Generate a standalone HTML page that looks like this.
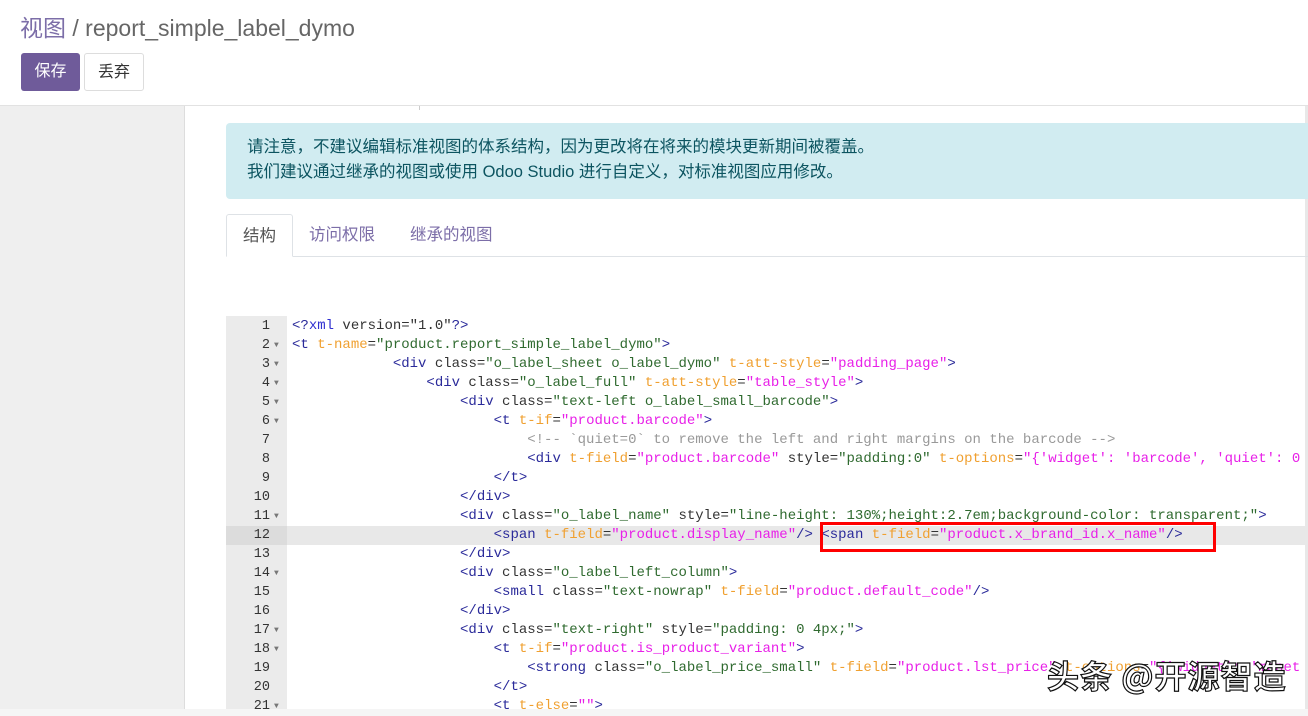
<!DOCTYPE html>
<html><head><meta charset="utf-8"><style>
*{margin:0;padding:0;box-sizing:border-box}
body{width:1308px;height:709px;overflow:hidden;background:#f5f5f5;font-family:"Liberation Sans","Noto Sans CJK SC",sans-serif;position:relative}
.hdr{position:absolute;left:0;top:0;width:1308px;height:106px;background:#fff;border-bottom:1px solid #e2e2e2}
.title{position:absolute;left:20px;top:9px;font-size:23px;color:#666}
.title b{font-weight:normal;color:#7c6ea8}
.btn{position:absolute;top:53px;height:38px;font-size:16px;line-height:38px;text-align:center;border-radius:3px}
.side{position:absolute;left:0;top:106px;width:185px;height:603px;background:#efefef;border-right:1px solid #ddd}
.sheet{position:absolute;left:185px;top:106px;width:1120px;height:603px;background:#fff}
.rstrip{position:absolute;left:1305px;top:106px;width:3px;height:603px;background:#e8e8e8}
.alert{position:absolute;left:226px;top:123px;width:1082px;height:76px;background:#d1ecf1;border-radius:4px 0 0 4px;color:#0c5460;font-size:16.5px;line-height:25px;padding:12px 0 0 21px}
.tabs{position:absolute;left:226px;top:256px;width:1082px;border-top:1px solid #dee2e6}
.tab{position:absolute;top:214px;height:43px;font-size:16.5px;line-height:43px;color:#7c6ea8}
.gut{position:absolute;left:226px;top:316px;width:61px;height:393px;background:#ebebeb}
.code{position:absolute;left:226px;top:317px;width:1082px;font-family:"Liberation Mono",monospace;font-size:14px}
.l{height:19px;line-height:19px;position:relative;white-space:pre}
.n{position:absolute;left:0;width:44px;text-align:right;color:#333;font-size:13.5px}
.f{position:absolute;left:48px;font-size:8px;color:#777}
.c{position:absolute;left:66px;color:#333}
.t{color:#2a2a9a}.a{color:#f0a030}.s{color:#2f6a2f}.m{color:#e820e8}.g{color:#999}
.hl{background:#e8e8e8}
.red{position:absolute;left:820px;top:522px;width:396px;height:30px;border:3px solid #f00}
.wm{position:absolute;left:1047px;top:652px;font-size:32px;color:#fff;-webkit-text-stroke:1.2px #111;font-family:"Noto Sans CJK SC",sans-serif;font-weight:bold;letter-spacing:1px}
</style></head><body>
<div class="hdr">
<div class="title"><b>视图</b> / report_simple_label_dymo</div>
<div class="btn" style="left:21px;width:59px;background:#6f5b9a;color:#fff">保存</div>
<div class="btn" style="left:84px;width:60px;border:1px solid #ddd;color:#333">丢弃</div>
</div>
<div class="side"></div>
<div class="sheet"></div>
<div class="rstrip"></div>
<div style="position:absolute;left:419px;top:106px;width:1px;height:4px;background:#ccc"></div>
<div class="alert">请注意，不建议编辑标准视图的体系结构，因为更改将在将来的模块更新期间被覆盖。<br>我们建议通过继承的视图或使用 Odoo Studio 进行自定义，对标准视图应用修改。</div>
<div class="tabs"></div>
<div class="tab" style="left:226px;width:67px;background:#fff;border:1px solid #dee2e6;border-bottom:1px solid #fff;border-radius:3px 3px 0 0;color:#555;text-align:center">结构</div>
<div class="tab" style="left:309px">访问权限</div>
<div class="tab" style="left:410px">继承的视图</div>
<div class="gut"></div>
<div class="code"><div class="l"><span class="n">1</span><span class="c"><span class="t">&lt;?</span><span class="t" style="color:#3030d0">xml</span> version="1.0"<span class="t">?&gt;</span></span></div><div class="l"><span class="n">2</span><span class="f">▼</span><span class="c"><span class="t">&lt;t</span> <span class="a">t-name</span>=<span class="s">"product.report_simple_label_dymo"</span><span class="t">&gt;</span></span></div><div class="l"><span class="n">3</span><span class="f">▼</span><span class="c">            <span class="t">&lt;div</span> class=<span class="s">"o_label_sheet o_label_dymo"</span> <span class="a">t-att-style</span>=<span class="m">"padding_page"</span><span class="t">&gt;</span></span></div><div class="l"><span class="n">4</span><span class="f">▼</span><span class="c">                <span class="t">&lt;div</span> class=<span class="s">"o_label_full"</span> <span class="a">t-att-style</span>=<span class="m">"table_style"</span><span class="t">&gt;</span></span></div><div class="l"><span class="n">5</span><span class="f">▼</span><span class="c">                    <span class="t">&lt;div</span> class=<span class="s">"text-left o_label_small_barcode"</span><span class="t">&gt;</span></span></div><div class="l"><span class="n">6</span><span class="f">▼</span><span class="c">                        <span class="t">&lt;t</span> <span class="a">t-if</span>=<span class="m">"product.barcode"</span><span class="t">&gt;</span></span></div><div class="l"><span class="n">7</span><span class="c">                            <span class="g">&lt;!-- `quiet=0` to remove the left and right margins on the barcode --&gt;</span></span></div><div class="l"><span class="n">8</span><span class="c">                            <span class="t">&lt;div</span> <span class="a">t-field</span>=<span class="m">"product.barcode"</span> style=<span class="s">"padding:0"</span> <span class="a">t-options</span>=<span class="m">"{'widget': 'barcode', 'quiet': 0</span></span></div><div class="l"><span class="n">9</span><span class="c">                        <span class="t">&lt;/t&gt;</span></span></div><div class="l"><span class="n">10</span><span class="c">                    <span class="t">&lt;/div&gt;</span></span></div><div class="l"><span class="n">11</span><span class="f">▼</span><span class="c">                    <span class="t">&lt;div</span> class=<span class="s">"o_label_name"</span> style=<span class="s">"line-height: 130%;height:2.7em;background-color: transparent;"</span><span class="t">&gt;</span></span></div><div class="l hl"><span class="n" style="background:#dcdcdc;width:61px;padding-right:17px">12</span><span class="c">                        <span class="t">&lt;span</span> <span class="a">t-field</span>=<span class="m">"product.display_name"</span><span class="t">/&gt;</span> <span class="t">&lt;span</span> <span class="a">t-field</span>=<span class="m">"product.x_brand_id.x_name"</span><span class="t">/&gt;</span></span></div><div class="l"><span class="n">13</span><span class="c">                    <span class="t">&lt;/div&gt;</span></span></div><div class="l"><span class="n">14</span><span class="f">▼</span><span class="c">                    <span class="t">&lt;div</span> class=<span class="s">"o_label_left_column"</span><span class="t">&gt;</span></span></div><div class="l"><span class="n">15</span><span class="c">                        <span class="t">&lt;small</span> class=<span class="s">"text-nowrap"</span> <span class="a">t-field</span>=<span class="m">"product.default_code"</span><span class="t">/&gt;</span></span></div><div class="l"><span class="n">16</span><span class="c">                    <span class="t">&lt;/div&gt;</span></span></div><div class="l"><span class="n">17</span><span class="f">▼</span><span class="c">                    <span class="t">&lt;div</span> class=<span class="s">"text-right"</span> style=<span class="s">"padding: 0 4px;"</span><span class="t">&gt;</span></span></div><div class="l"><span class="n">18</span><span class="f">▼</span><span class="c">                        <span class="t">&lt;t</span> <span class="a">t-if</span>=<span class="m">"product.is_product_variant"</span><span class="t">&gt;</span></span></div><div class="l"><span class="n">19</span><span class="c">                            <span class="t">&lt;strong</span> class=<span class="s">"o_label_price_small"</span> <span class="a">t-field</span>=<span class="m">"product.lst_price"</span> <span class="a">t-options</span>=<span class="m">"{'widget': 'monet</span></span></div><div class="l"><span class="n">20</span><span class="c">                        <span class="t">&lt;/t&gt;</span></span></div><div class="l"><span class="n">21</span><span class="f">▼</span><span class="c">                        <span class="t">&lt;t</span> <span class="a">t-else</span>=<span class="m">""</span><span class="t">&gt;</span></span></div></div>
<div class="red"></div>
<div class="wm">头条 @开源智造</div>
</body></html>
